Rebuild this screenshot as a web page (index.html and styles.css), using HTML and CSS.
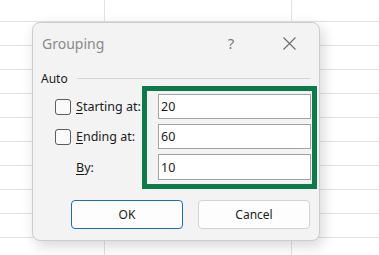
FILE: index.html
```html
<!DOCTYPE html>
<html>
<head>
  <title>Grouping</title>
  <link rel="stylesheet" href="styles.css">
</head>
<body>
  <!-- Sheet grid behind the dialog -->
  <div class="sheet">
    <div class="dialog">
      <!-- Title bar -->
      <div class="titlebar">
        <div class="title">Grouping</div>
        <div class="title-buttons">
          <span class="title-btn help">?</span>
          <span class="title-btn close">
            <svg width="13" height="13" viewBox="0 0 13 13">
              <path d="M0.5 0.5 L12.5 12.5 M12.5 0.5 L0.5 12.5" stroke="#6b6b6b" stroke-width="1.1" fill="none"/>
            </svg>
          </span>
        </div>
      </div>

      <!-- Auto group -->
      <div class="dialog-body">
        <div class="group-label">
          <span>Auto</span>
          <div class="group-line"></div>
        </div>

        <div class="form">
          <div class="labels">
            <div class="row">
              <span class="checkbox"></span>
              <span><u>S</u>tarting at:</span>
            </div>
            <div class="row">
              <span class="checkbox"></span>
              <span><u>E</u>nding at:</span>
            </div>
            <div class="row indent">
              <span><u>B</u>y:</span>
            </div>
          </div>
          <div class="fields">
            <input class="field" type="text" value="20">
            <input class="field" type="text" value="60">
            <input class="field" type="text" value="10">
          </div>
        </div>

        <div class="buttons">
          <button class="btn primary">OK</button>
          <button class="btn">Cancel</button>
        </div>
      </div>
    </div>
  </div>
</body>
</html>
```

FILE: styles.css
```css
/* General Styles */
body {
    margin: 0;
    font-family: "Noto Sans", "Open Sans", sans-serif;
    background-color: #ffffff;
    color: #1b1b1b;
}

/* Sheet grid */
.sheet {
    width: 379px;
    height: 255px;
    overflow: hidden;
    padding: 22px 0 0 32px;
    box-sizing: border-box;
    background-image:
        linear-gradient(to right, transparent 104px, #e2e2e2 104px, #e2e2e2 105px, transparent 105px, transparent 291px, #e2e2e2 291px, #e2e2e2 292px, transparent 292px),
        linear-gradient(to bottom, transparent 23px, #e2e2e2 23px);
    background-size: 100% 100%, 100% 24px;
    background-position: 0 0, 0 -2px;
}

/* Dialog */
.dialog {
    width: 288px;
    height: 219px;
    box-sizing: border-box;
    background-color: #f3f3f3;
    border: 1px solid #cdcdcd;
    border-radius: 8px;
    box-shadow: 3px 5px 14px rgba(0, 0, 0, 0.16);
}

.titlebar {
    display: flex;
    justify-content: space-between;
    align-items: center;
    height: 39px;
    padding-left: 9px;
}

.title {
    font-size: 14px;
    color: #8a8a8a;
    padding-top: 1px;
}

.title-buttons {
    display: flex;
    align-items: center;
    gap: 14px;
    padding-right: 8px;
}

.title-btn {
    width: 44px;
    display: flex;
    justify-content: center;
    align-items: center;
    color: #7a7a7a;
    font-size: 15px;
}

.title-btn.close {
    padding-top: 1px;
}

.dialog-body {
    padding: 8px 9px 0 8px;
}

/* Group label */
.group-label {
    display: flex;
    align-items: center;
    height: 16px;
    font-size: 12px;
    gap: 9px;
}

.group-line {
    flex: 1;
    height: 1px;
    background-color: #d6d6d6;
}

/* Form */
.form {
    display: flex;
    margin-left: 14px;
}

.labels {
    flex-shrink: 0;
    width: 87px;
    padding-top: 8px;
    display: flex;
    flex-direction: column;
    gap: 5px;
}

.row {
    display: flex;
    align-items: center;
    gap: 5px;
    height: 25px;
    font-size: 12.5px;
    white-space: nowrap;
}

.row.indent {
    padding-left: 21px;
    height: 26px;
}

.row u {
    text-underline-offset: 2px;
}

.checkbox {
    flex-shrink: 0;
    width: 14px;
    height: 14px;
    border: 1px solid #5c5c5c;
    border-radius: 3px;
    background-color: #fafafa;
}

/* Highlighted fields */
.fields {
    flex-shrink: 0;
    width: 175px;
    height: 103px;
    box-sizing: border-box;
    border: 5px solid #0c7a49;
    padding: 3px 1px 0 11px;
    display: flex;
    flex-direction: column;
    gap: 5px;
}

.field {
    height: 25px;
    box-sizing: border-box;
    margin: 0;
    border: 1px solid #a2a2a2;
    background-color: #ffffff;
    font-family: "Noto Sans", sans-serif;
    font-size: 12.5px;
    color: #1b1b1b;
    padding: 0 2px;
    outline: none;
}

.field:last-child {
    height: 26px;
}

/* Buttons */
.buttons {
    display: flex;
    gap: 15px;
    margin-top: 11px;
    padding-left: 30px;
}

.btn {
    width: 112px;
    height: 29px;
    font-family: "Noto Sans", sans-serif;
    font-size: 12px;
    color: #1b1b1b;
    background-color: #fdfdfd;
    border: 1px solid #d3d3d3;
    border-radius: 4px;
}

.btn.primary {
    border-color: #1a6fb8;
}
```
